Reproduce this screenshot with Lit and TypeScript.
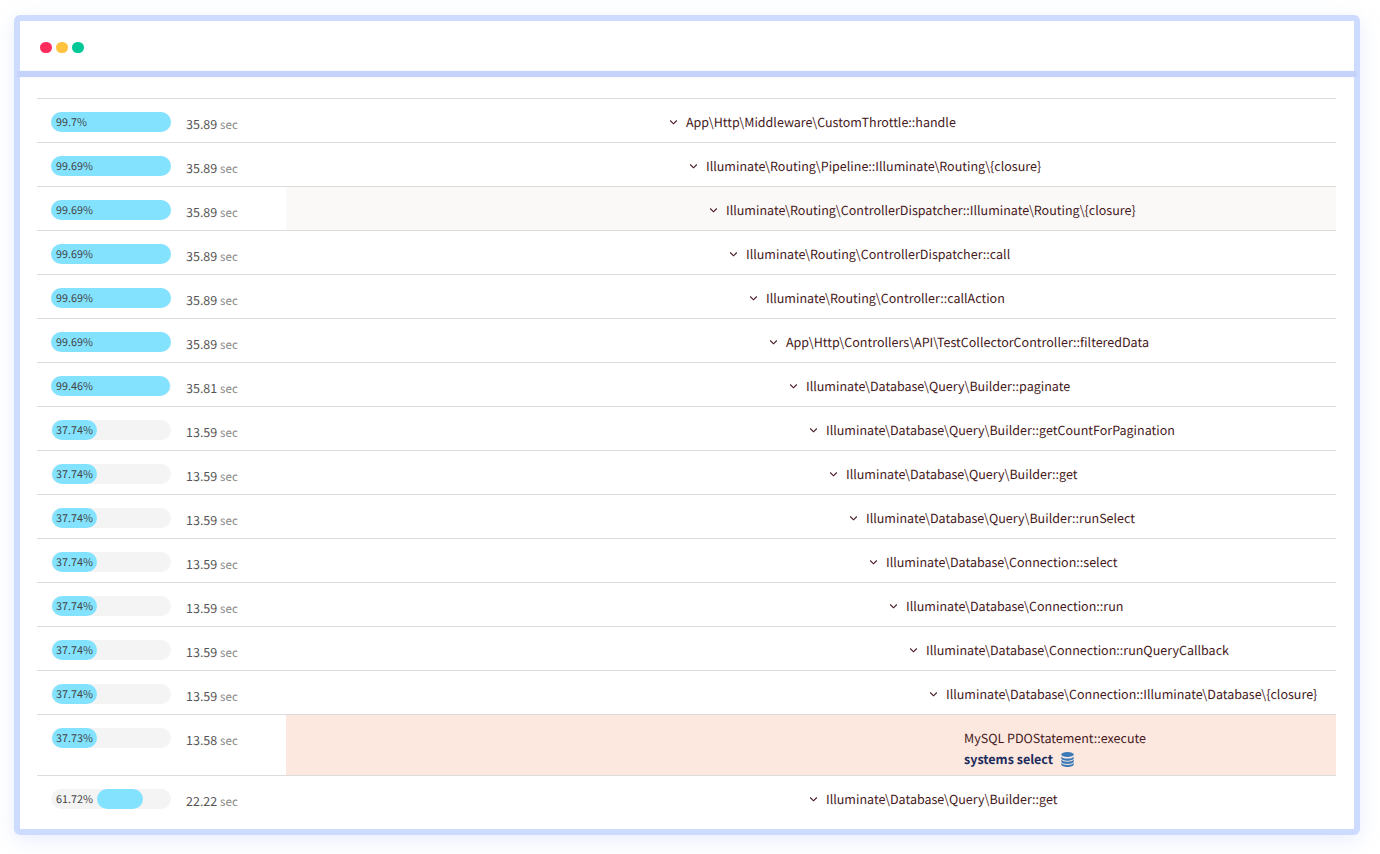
import { LitElement, html, css } from "lit";
import { customElement } from "lit/decorators.js";

interface Row { pct: number; label: string; time: string; name: string; level: number; offset?: boolean; query?: boolean; hover?: boolean; }

const R = (pct: number, time: string, name: string, level: number, extra: Partial<Row> = {}): Row => ({ pct, label: `${pct}%`, time, name, level, ...extra });

const rows: Row[] = [
  R(99.7, "35.89", "App\\Http\\Middleware\\CustomThrottle::handle", 0),
  R(99.69, "35.89", "Illuminate\\Routing\\Pipeline::Illuminate\\Routing\\{closure}", 1),
  R(99.69, "35.89", "Illuminate\\Routing\\ControllerDispatcher::Illuminate\\Routing\\{closure}", 2, { hover: true }),
  R(99.69, "35.89", "Illuminate\\Routing\\ControllerDispatcher::call", 3),
  R(99.69, "35.89", "Illuminate\\Routing\\Controller::callAction", 4),
  R(99.69, "35.89", "App\\Http\\Controllers\\API\\TestCollectorController::filteredData", 5),
  R(99.46, "35.81", "Illuminate\\Database\\Query\\Builder::paginate", 6),
  R(37.74, "13.59", "Illuminate\\Database\\Query\\Builder::getCountForPagination", 7),
  R(37.74, "13.59", "Illuminate\\Database\\Query\\Builder::get", 8),
  R(37.74, "13.59", "Illuminate\\Database\\Query\\Builder::runSelect", 9),
  R(37.74, "13.59", "Illuminate\\Database\\Connection::select", 10),
  R(37.74, "13.59", "Illuminate\\Database\\Connection::run", 11),
  R(37.74, "13.59", "Illuminate\\Database\\Connection::runQueryCallback", 12),
  R(37.74, "13.59", "Illuminate\\Database\\Connection::Illuminate\\Database\\{closure}", 13),
  R(37.73, "13.58", "MySQL PDOStatement::execute", 14.75, { query: true }),
  R(61.72, "22.22", "Illuminate\\Database\\Query\\Builder::get", 7, { offset: true }),
];

@customElement("app-root")
export class AppRoot extends LitElement {
  static styles = css`
    :host { display: block; height: 854px; padding: 15px 20px 0 14px; box-sizing: border-box; font-family: "Noto Sans CJK JP", "Noto Sans", sans-serif; background: #fff; text-rendering: geometricPrecision; }
    .frame { height: 820px; box-sizing: border-box; border: 6px solid #cddbff; border-radius: 6px; background: #fff; box-shadow: 0 5px 20px rgba(190, 205, 250, 0.35); }
    .head { height: 49px; display: flex; align-items: center; gap: 4.4px; padding-left: 20px; box-sizing: border-box; padding-top: 4px; }
    .dot { width: 11.6px; height: 11.6px; border-radius: 50%; }
    .sep { height: 6px; margin: 1px -3px 0; background: #c5d3fa; box-shadow: 0 0 1px #d9e2fb; }
    .table { margin: 21px 18px 0 17px; }
    .row { display: flex; border-top: 1px solid #dcdcdc; height: 44px; box-sizing: border-box; }
    .row.q { height: 61px; }
    .perf { width: 249px; flex: none; display: flex; align-items: flex-start; padding: 13px 0 0 14px; box-sizing: border-box; }
    .bar { position: relative; width: 120px; height: 20px; border-radius: 10px; background: #f4f4f4; flex: none; }
    .fill { height: 20px; border-radius: 10px; background: #83e3ff; }
    .fill.part { margin-left: 0.7px; }
    .pct { position: absolute; left: 5px; top: 0; line-height: 21px; font-size: 10.8px; color: #444; }
    .time { margin-left: 15px; font-size: 12.5px; line-height: 20px; padding-top: 2px; color: #555; white-space: nowrap; }
    .time span { font-size: 11.6px; color: #888; }
    .call { flex: 1; min-width: 0; display: flex; align-items: flex-start; padding-top: 13px; box-sizing: border-box; font-size: 12.52px; line-height: 20px; color: #451820; white-space: nowrap; }
    .call.hover { background: #fbf9f7; }
    .call.q { background: #fde8e0; }
    .chev { width: 9px; height: 6px; flex: none; margin: 7px 8px 0 0; }
    .qb { display: flex; flex-direction: column; }
    .sys { display: flex; align-items: center; gap: 8px; font-weight: 700; color: #1c2c5b; line-height: 22px; }
    .sys svg { width: 13px; height: 15px; }
  `;

  render() {
    return html`<div class="frame">
      <div class="head">
        <div class="dot" style="background:#ff2d5e"></div>
        <div class="dot" style="background:#ffc23f"></div>
        <div class="dot" style="background:#00c896"></div>
      </div>
      <div class="sep"></div>
      <div class="table">
        ${rows.map((r) => this.renderRow(r))}
      </div>
    </div>`;
  }

  renderRow(r: Row) {
    const callClass = `call${r.hover ? " hover" : ""}${r.query ? " q" : ""}`;
    const pad = 383 + r.level * 20;
    const part = r.pct < 90 && !r.offset;
    return html`<div class="row ${r.query ? "q" : ""}">
      <div class="perf">
        <div class="bar">
          <div class="fill ${part ? "part" : ""}" style="width:${r.offset ? 100 - r.pct : r.pct}%;margin-left:${r.offset ? `${r.pct - 23.4}%` : ""}"></div>
          <div class="pct">${r.label}</div>
        </div>
        <div class="time">${r.time} <span>sec</span></div>
      </div>
      <div class="${callClass}" style="padding-left:${pad}px">
        ${r.query
          ? html`<div class="qb"><div>${r.name}</div>
              <div class="sys">systems select
                <svg viewBox="0 0 13 15"><g fill="#3a7ab8">
                  <ellipse cx="6.5" cy="2.6" rx="6.2" ry="2.5"/>
                  <path d="M.3 4.4c1 1.5 3.3 2.2 6.2 2.2s5.2-.7 6.2-2.2v1.9c0 1.4-2.8 2.5-6.2 2.5s-6.2-1.1-6.2-2.5z"/>
                  <path d="M.3 7.6c1 1.5 3.3 2.2 6.2 2.2s5.2-.7 6.2-2.2v1.9c0 1.4-2.8 2.5-6.2 2.5s-6.2-1.1-6.2-2.5z"/>
                  <path d="M.3 10.8c1 1.5 3.3 2.2 6.2 2.2s5.2-.7 6.2-2.2v1.7c0 1.4-2.8 2.5-6.2 2.5s-6.2-1.1-6.2-2.5z"/>
                </g></svg>
              </div></div>`
          : html`<svg class="chev" viewBox="0 0 9 6"><path d="M1.2 1.5l3.3 3.3 3.3-3.3" fill="none" stroke="#451820" stroke-width="1.1"/></svg><div>${r.name}</div>`}
      </div>
    </div>`;
  }
}
